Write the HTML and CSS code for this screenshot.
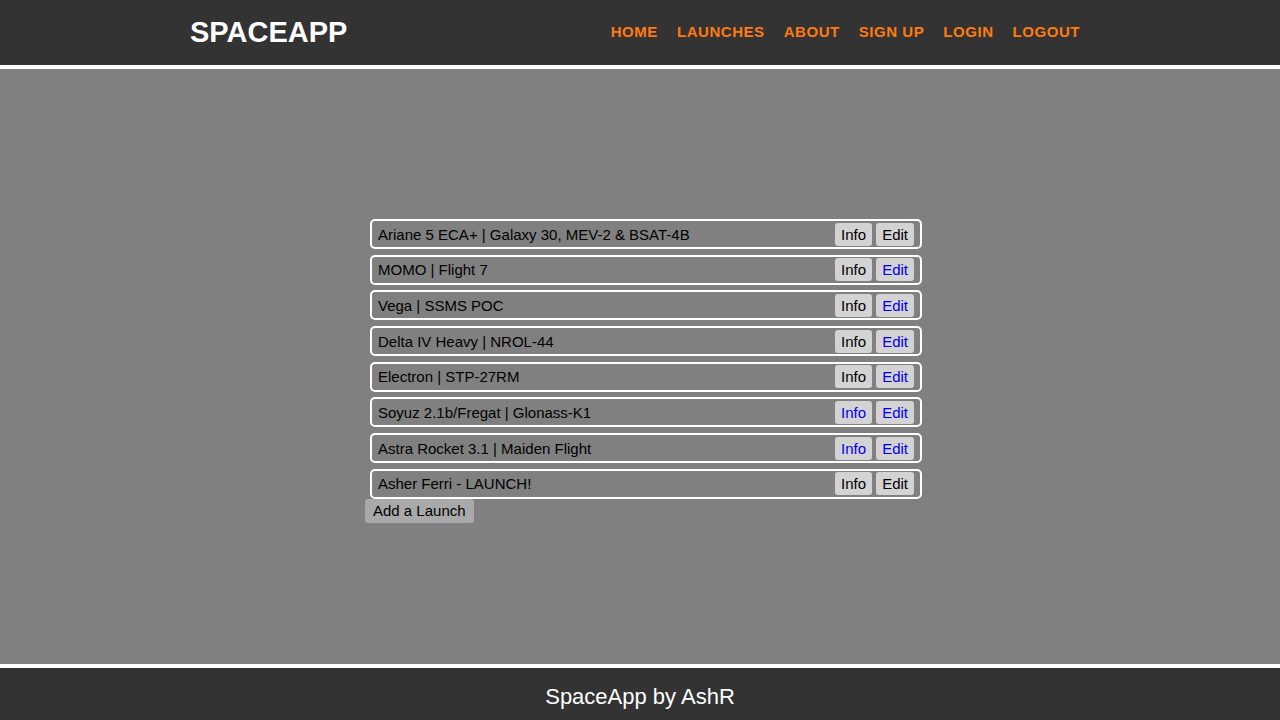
FILE: index.html
```html
<!DOCTYPE html>
<html>
<head>
<meta charset="utf-8">
<title>SpaceApp</title>
<link rel="stylesheet" href="styles.css">
</head>
<body>
<header class="site-header">
  <div class="header-inner">
    <div class="logo">SPACEAPP</div>
    <nav class="nav">
      <a class="nav-link" href="#">HOME</a>
      <a class="nav-link" href="#">LAUNCHES</a>
      <a class="nav-link" href="#">ABOUT</a>
      <a class="nav-link" href="#">SIGN UP</a>
      <a class="nav-link" href="#">LOGIN</a>
      <a class="nav-link" href="#">LOGOUT</a>
    </nav>
  </div>
</header>
<main class="main">
  <div class="launches">
    <div class="launch-row"><span class="launch-name">Ariane 5 ECA+ | Galaxy 30, MEV-2 &amp; BSAT-4B</span><span class="actions"><span class="btn">Info</span><span class="btn">Edit</span></span></div>
    <div class="launch-row"><span class="launch-name">MOMO | Flight 7</span><span class="actions"><span class="btn">Info</span><span class="btn link">Edit</span></span></div>
    <div class="launch-row"><span class="launch-name">Vega | SSMS POC</span><span class="actions"><span class="btn">Info</span><span class="btn link">Edit</span></span></div>
    <div class="launch-row"><span class="launch-name">Delta IV Heavy | NROL-44</span><span class="actions"><span class="btn">Info</span><span class="btn link">Edit</span></span></div>
    <div class="launch-row"><span class="launch-name">Electron | STP-27RM</span><span class="actions"><span class="btn">Info</span><span class="btn link">Edit</span></span></div>
    <div class="launch-row"><span class="launch-name">Soyuz 2.1b/Fregat | Glonass-K1</span><span class="actions"><span class="btn link">Info</span><span class="btn link">Edit</span></span></div>
    <div class="launch-row"><span class="launch-name">Astra Rocket 3.1 | Maiden Flight</span><span class="actions"><span class="btn link">Info</span><span class="btn link">Edit</span></span></div>
    <div class="launch-row"><span class="launch-name">Asher Ferri - LAUNCH!</span><span class="actions"><span class="btn">Info</span><span class="btn">Edit</span></span></div>
    <button class="add-btn">Add a Launch</button>
  </div>
</main>
<footer class="site-footer">SpaceApp by AshR</footer>
</body>
</html>
```
FILE: styles.css
```css
* { box-sizing: border-box; }
html, body { margin: 0; padding: 0; }
body {
  font-family: "Liberation Sans", Arial, Helvetica, sans-serif;
  background: #808080;
  height: 720px;
  display: flex;
  flex-direction: column;
  overflow: hidden;
}
.site-header {
  background: #333333;
  height: 69px;
  border-bottom: 4px solid #ffffff;
  flex: none;
}
.header-inner {
  width: 900px;
  margin: 0 auto;
  height: 65px;
  display: flex;
  align-items: center;
  justify-content: space-between;
  padding-right: 10px;
}
.logo {
  color: #ffffff;
  font-weight: bold;
  font-size: 29px;
}
.nav {
  display: flex;
  gap: 19px;
  margin-bottom: 3px;
}
.nav-link {
  color: #ff7b0f;
  text-decoration: none;
  font-weight: bold;
  font-size: 15px;
  letter-spacing: 0.55px;
}
.main {
  flex: 1;
  padding-top: 150px;
}
.launches {
  margin-left: 365px;
  width: 557px;
  display: flex;
  flex-direction: column;
  align-items: flex-start;
}
.launch-row {
  margin-left: 5px;
  width: 552px;
  height: 30px;
  border: 2px solid #ffffff;
  border-radius: 5px;
  display: flex;
  align-items: center;
  justify-content: space-between;
  padding: 0 6px;
  margin-bottom: 5.7px;
  font-size: 15px;
  color: #000;
}
.launch-row:last-of-type { margin-bottom: 0; }
.actions { display: flex; gap: 4px; }
.btn {
  background: #d3d3d3;
  border-radius: 3px;
  height: 23px;
  line-height: 23px;
  padding: 0 6px;
  font-size: 15px;
  color: #000;
}
.btn.link { color: #0000ee; }
.add-btn {
  font-family: "Liberation Sans", Arial, Helvetica, sans-serif;
  font-size: 15px;
  background: #a9a9a9;
  border: none;
  border-radius: 3px;
  height: 24px;
  padding: 0 8px;
  color: #000;
}
.site-footer {
  flex: none;
  height: 56px;
  border-top: 4px solid #ffffff;
  background: #333333;
  color: #ffffff;
  font-size: 22px;
  display: flex;
  align-items: center;
  justify-content: center;
  padding-top: 6px;
}
```
